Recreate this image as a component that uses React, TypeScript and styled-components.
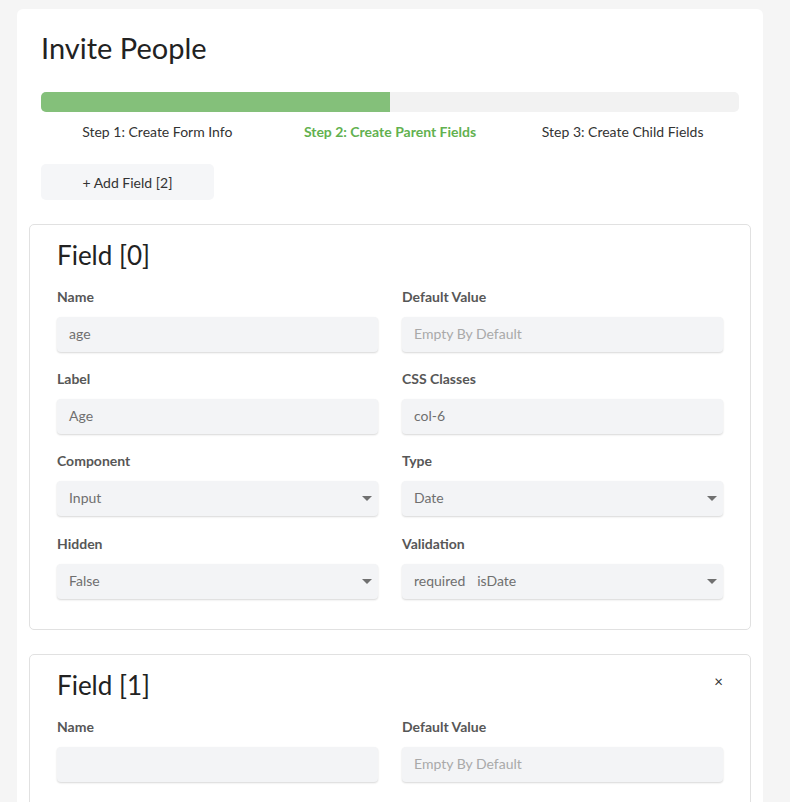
import React from "react";
import styled, { createGlobalStyle } from "styled-components";

const Global = createGlobalStyle`
  html, body { margin: 0; padding: 0; background: #f5f5f5; }
  body { font-family: Lato, "Open Sans", sans-serif; color: #333; }
  * { box-sizing: border-box; }
`;

const Page = styled.div`
  padding: 9px 27px 0 17px;
`;

const Card = styled.div`
  background: #fff;
  border-radius: 6px 6px 0 0;
  padding: 21px 24px 40px;
  min-height: 793px;
`;

const Title = styled.h1`
  margin: 0;
  font-size: 29px;
  line-height: 35px;
  font-weight: 400;
  color: #222;
`;

const Progress = styled.div`
  margin-top: 27px;
  height: 20px;
  background: #f2f2f2;
  border-radius: 5px;
  overflow: hidden;
`;

const ProgressFill = styled.div`
  height: 100%;
  background: #84c07a;
`;

const Steps = styled.div`
  margin-top: 10px;
  display: grid;
  grid-template-columns: repeat(3, 1fr);
`;

const Step = styled.div<{ $active?: boolean }>`
  text-align: center;
  font-size: 14px;
  line-height: 20px;
  color: ${(p) => (p.$active ? "#62b14f" : "#333")};
  font-weight: ${(p) => (p.$active ? 700 : 400)};
`;

const AddButton = styled.button`
  margin-top: 22px;
  width: 173px;
  height: 36px;
  border: none;
  border-radius: 5px;
  background: #f5f6f8;
  font-family: inherit;
  font-size: 14px;
  color: #333;
  cursor: pointer;
`;

const FieldCard = styled.section`
  position: relative;
  margin: 24px -12px 0;
  border: 1px solid #e1e1e1;
  border-radius: 5px;
  padding: 14px 27px 30px;
  & + & { margin-top: 24px; }
`;

const FieldTitle = styled.h2`
  margin: 0;
  font-size: 26px;
  line-height: 32px;
  font-weight: 400;
  color: #222;
`;

const Close = styled.button`
  position: absolute;
  top: 17px;
  right: 27px;
  border: none;
  background: none;
  font-family: inherit;
  font-size: 15px;
  color: #333;
  padding: 0;
  cursor: pointer;
`;

const Grid = styled.div`
  margin-top: 16px;
  display: grid;
  grid-template-columns: 1fr 1fr;
  column-gap: 24px;
  row-gap: 17.2px;
`;

const Group = styled.div`
  display: flex;
  flex-direction: column;
`;

const Label = styled.label`
  font-size: 14px;
  line-height: 20px;
  font-weight: 700;
  color: #575757;
  margin-bottom: 10px;
`;

const Box = styled.div<{ $placeholder?: boolean }>`
  height: 35px;
  background: #f3f4f6;
  border-radius: 4px;
  box-shadow: 0 1px 2px rgba(0, 0, 0, 0.16);
  display: flex;
  align-items: center;
  padding: 0 6px 0 12px;
  font-size: 14px;
  line-height: 20px;
  color: ${(p) => (p.$placeholder ? "#a9a9a9" : "#6f6f6f")};
`;

const Value = styled.span`
  flex: 1;
  display: flex;
  gap: 12px;
  margin-top: -1px;
`;

const Caret = styled.span`
  width: 0;
  height: 0;
  border-left: 5px solid transparent;
  border-right: 5px solid transparent;
  border-top: 5px solid #707070;
`;

type Field = {
  label: string;
  value?: string | string[];
  placeholder?: string;
  select?: boolean;
};

const Input = ({ f }: { f: Field }) => {
  const vals = Array.isArray(f.value) ? f.value : f.value ? [f.value] : [];
  return (
    <Group>
      <Label>{f.label}</Label>
      <Box $placeholder={!vals.length}>
        <Value>
          {vals.length ? vals.map((v) => <span key={v}>{v}</span>) : f.placeholder}
        </Value>
        {f.select && <Caret />}
      </Box>
    </Group>
  );
};

const field0: Field[] = [
  { label: "Name", value: "age" },
  { label: "Default Value", placeholder: "Empty By Default" },
  { label: "Label", value: "Age" },
  { label: "CSS Classes", value: "col-6" },
  { label: "Component", value: "Input", select: true },
  { label: "Type", value: "Date", select: true },
  { label: "Hidden", value: "False", select: true },
  { label: "Validation", value: ["required", "isDate"], select: true },
];

const field1: Field[] = [
  { label: "Name" },
  { label: "Default Value", placeholder: "Empty By Default" },
];

export default function App() {
  return (
    <Page>
      <Global />
      <Card>
        <Title>Invite People</Title>
        <Progress>
          <ProgressFill style={{ width: "50%" }} />
        </Progress>
        <Steps>
          <Step>Step 1: Create Form Info</Step>
          <Step $active>Step 2: Create Parent Fields</Step>
          <Step>Step 3: Create Child Fields</Step>
        </Steps>
        <AddButton>+ Add Field [2]</AddButton>
        <FieldCard>
          <FieldTitle>Field [0]</FieldTitle>
          <Grid>
            {field0.map((f) => (
              <Input key={f.label} f={f} />
            ))}
          </Grid>
        </FieldCard>
        <FieldCard>
          <FieldTitle>Field [1]</FieldTitle>
          <Close aria-label="remove">×</Close>
          <Grid>
            {field1.map((f) => (
              <Input key={f.label} f={f} />
            ))}
          </Grid>
        </FieldCard>
      </Card>
    </Page>
  );
}
